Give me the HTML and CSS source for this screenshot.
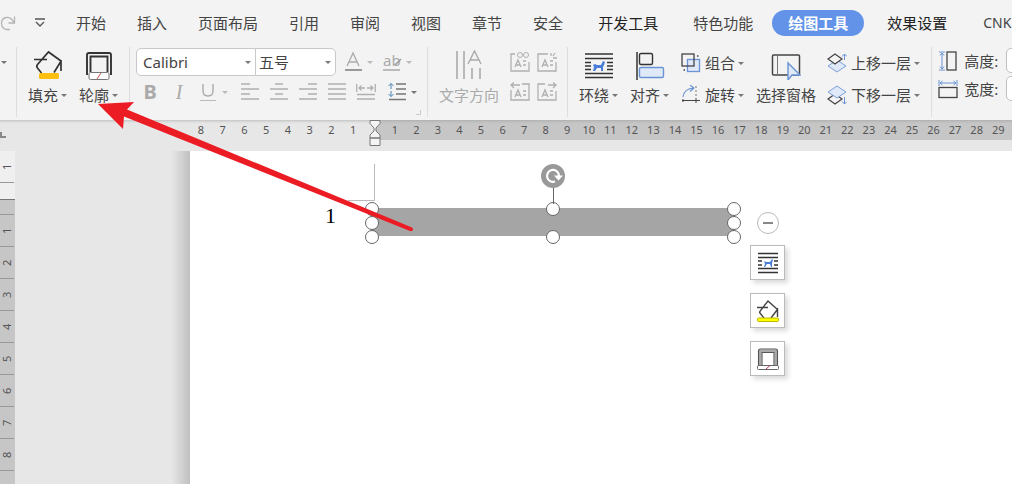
FILE: index.html
```html
<!DOCTYPE html>
<html lang="zh-CN">
<head>
  <meta charset="UTF-8" />
  <title>绘图工具</title>
  <link rel="stylesheet" href="styles.css">
</head>
<body>
  <!-- Tabs -->
  <nav class="tabs">
    <button class="quick redo" aria-label="恢复">
      <svg width="16" height="16" viewBox="0 0 16 16"><path d="M10 14.500H6C0 12 0 4 6 2.500c4-.5 6.500 2 8 5.500M14.500 1.500v6.500H8.500" stroke="#b5b5b5" stroke-width="1.300"/></svg>
    </button>
    <button class="quick more" aria-label="更多">
      <svg width="12" height="12" viewBox="0 0 12 12"><path d="M1 2h10M2 5l4 4 4-4" stroke="#555" stroke-width="1.300"/></svg>
    </button>
    <a href="#">开始</a>
    <a href="#">插入</a>
    <a href="#">页面布局</a>
    <a href="#">引用</a>
    <a href="#">审阅</a>
    <a href="#">视图</a>
    <a href="#">章节</a>
    <a href="#">安全</a>
    <a href="#" class="extra dark">开发工具</a>
    <a href="#" class="extra">特色功能</a>
    <a href="#" class="active">绘图工具</a>
    <a href="#" class="effect dark">效果设置</a>
    <a href="#" class="cnk">CNK</a>
  </nav>

  <!-- Ribbon -->
  <div class="ribbon">
    <div class="group group-first"><i class="caret"></i></div>

    <div class="group">
      <button class="tool">
        <svg width="30" height="30" viewBox="0 0 30 30">
          <path d="M8.500 23l-4-5C3.500 17 3.500 16 4.500 14.500L15.500 2 28 11M1 9.500h13M28 10v11M27.500 12l-6.500 10.500" stroke="#333" stroke-width="1.700"/>
          <rect x="6" y="23" width="20" height="6" rx="1.500" fill="#fdc010"/>
        </svg>
        <span>填充<i class="caret"></i></span>
      </button>
      <button class="tool">
        <svg width="30" height="30" viewBox="0 0 30 30">
          <path d="M3 25V5q0-2 2-2h20q2 0 2 2v20M6.500 22V6.500h17V22" stroke="#333" stroke-width="1.900"/>
          <rect x="5" y="22.500" width="20" height="7" rx="1.500" fill="#fff" stroke="#777"/>
          <path d="M13 29l4-6" stroke="#c0504d"/>
        </svg>
        <span>轮廓<i class="caret"></i></span>
      </button>
    </div>

    <div class="group group-font">
      <div class="row">
        <div class="combo combo-font">
          <select aria-label="字体"><option>Calibri</option></select><i class="caret"></i>
        </div>
        <div class="combo combo-size">
          <select aria-label="字号"><option>五号</option></select><i class="caret"></i>
        </div>
        <button class="mini mini-first off" aria-label="字体颜色">
          <svg width="20" height="22" viewBox="0 0 20 22"><path d="M4 15L10 2l6 13M6 11h8" stroke="#aaa" stroke-width="1.300"/><path d="M2 19h17" stroke="#999" stroke-width="2"/></svg>
          <i class="caret"></i>
        </button>
        <button class="mini off" aria-label="突出显示">
          <svg width="20" height="22" viewBox="0 0 20 22"><text x="1" y="15" font-size="15" fill="#aaa">ab</text><path d="M13 14l6-6" stroke="#999" stroke-width="1.500"/><path d="M1 19h17" stroke="#bbb" stroke-width="2"/></svg>
          <i class="caret"></i>
        </button>
      </div>
      <div class="row row-format">
        <button class="mini letter bold">B</button>
        <button class="mini letter italic">I</button>
        <button class="mini off underline" aria-label="下划线">
          <svg width="20" height="20" viewBox="0 0 20 20"><path d="M5 2v7q0 5 5 5t5-5V2" stroke="#aaa" stroke-width="1.400"/><path d="M2 18.500h16" stroke="#bbb"/></svg>
          <i class="caret"></i>
        </button>
        <button class="mini" aria-label="左对齐">
          <svg width="20" height="20" viewBox="0 0 20 20"><path d="M1 2h9M1 7h18M1 12h9M1 17h18" stroke="#b0b0b0" stroke-width="1.600"/></svg>
        </button>
        <button class="mini" aria-label="居中">
          <svg width="20" height="20" viewBox="0 0 20 20"><path d="M6 2h8M1 7h18M6 12h8M1 17h18" stroke="#b0b0b0" stroke-width="1.600"/></svg>
        </button>
        <button class="mini" aria-label="右对齐">
          <svg width="20" height="20" viewBox="0 0 20 20"><path d="M10 2h9M1 7h18M10 12h9M1 17h18" stroke="#b0b0b0" stroke-width="1.600"/></svg>
        </button>
        <button class="mini" aria-label="两端对齐">
          <svg width="20" height="20" viewBox="0 0 20 20"><path d="M1 2h18M1 7h18M1 12h18M1 17h18" stroke="#b0b0b0" stroke-width="1.600"/></svg>
        </button>
        <button class="mini" aria-label="分散对齐">
          <svg width="20" height="20" viewBox="0 0 20 20"><path d="M.7 2v8M19.300 2v8M3 6h6M11 6h6M5.500 3.500L3 6l2.500 2.500M14.500 3.500L17 6l-2.500 2.500M1 12.500h18M1 17h18" stroke="#b0b0b0" stroke-width="1.300"/></svg>
        </button>
        <button class="mini spacing" aria-label="行距">
          <svg width="20" height="20" viewBox="0 0 20 20"><path d="M9 2h10M9 7h10M9 12h10M2 17.500h17" stroke="#777" stroke-width="1.600"/><path d="M4 7V1.500M1.500 4L4 1.500 6.500 4M4 9v5.500M1.500 12L4 14.500 6.500 12" stroke="#4f86b8"/></svg>
          <i class="caret"></i>
        </button>
      </div>
      <i class="launcher"></i>
    </div>

    <div class="group">
      <button class="tool off" disabled>
        <svg width="30" height="30" viewBox="0 0 30 30"><path d="M3 1v28M10 1v28M18 18v11M26 18v11" stroke="#aaa" stroke-width="1.600"/><path d="M14 14l6.500-13L27 14M16.500 10h8" stroke="#aaa" stroke-width="1.400"/></svg>
        <span>文字方向</span>
      </button>
      <div class="links">
        <button class="mini" aria-label="创建链接">
          <svg width="20" height="20" viewBox="0 0 20 20"><path d="M5 2H1v17h18v-9M5 15l3-7 3 7M6 13h4M13 9h3M13 13h3" stroke="#b0b0b0" stroke-width="1.300"/><circle cx="10" cy="3" r="2.500" stroke="#b0b0b0"/><circle cx="16" cy="3" r="2.500" stroke="#b0b0b0"/></svg>
        </button>
        <button class="mini" aria-label="断开链接">
          <svg width="20" height="20" viewBox="0 0 20 20"><path d="M11 2H1v17h18v-9M5 15l3-7 3 7M6 13h4M13 9h3M13 13h3M14 1v3M18 1l-2 3M16 6h4" stroke="#b0b0b0" stroke-width="1.300"/></svg>
        </button>
        <button class="mini" aria-label="前一文本框">
          <svg width="20" height="20" viewBox="0 0 20 20"><path d="M12 2h7v16H1V8M5 15l3-7 3 7M6 13h4M13 9h3M13 13h3M10 3H1M4 .5L1 3l3 3" stroke="#b0b0b0" stroke-width="1.300"/></svg>
        </button>
        <button class="mini" aria-label="下一文本框">
          <svg width="20" height="20" viewBox="0 0 20 20"><path d="M8 2H1v16h18V9M5 15l3-7 3 7M6 13h4M13 9h3M13 13h3M11 3h8M16 .5L19 3l-3 3" stroke="#b0b0b0" stroke-width="1.300"/></svg>
        </button>
      </div>
    </div>

    <div class="group">
      <button class="tool">
        <svg width="30" height="30" viewBox="0 0 30 30">
          <path d="M1 4h28M1 8.500h28M1 12.500h6M1 16h6M1 19.500h6M23 12.500h6M23 16h6M23 19.500h6M1 23.500h28M1 27.500h28" stroke="#333" stroke-width="1.700"/>
          <path d="M9 15l2-1 2 1h4l2-4 2 1-1 3-1 2v4h-2v-3h-4l-2 3h-2l1-4z" fill="#4a7dd8"/>
        </svg>
        <span>环绕<i class="caret"></i></span>
      </button>
      <button class="tool">
        <svg width="30" height="30" viewBox="0 0 30 30">
          <path d="M2 2v28" stroke="#333" stroke-width="1.500"/>
          <rect x="4.500" y="3.500" width="13" height="11" rx="1.500" stroke="#333" stroke-width="1.400"/>
          <rect x="4.500" y="17.500" width="24" height="10" rx="1.500" fill="#dfe9f8" stroke="#6a93d4" stroke-width="1.400"/>
        </svg>
        <span>对齐<i class="caret"></i></span>
      </button>
      <div class="stack">
        <button class="line">
          <svg width="20" height="20" viewBox="0 0 20 20"><rect x="6.500" y="6.500" width="12" height="12" fill="#dfe9f8" stroke="#6a93d4" stroke-width="1.300"/><rect x="1" y="1" width="12" height="12" stroke="#444" stroke-width="1.300"/><path d="M16 3h1.500M2.500 17H4" stroke="#444" stroke-width="1.500"/></svg>
          组合<i class="caret"></i>
        </button>
        <button class="line">
          <svg width="20" height="20" viewBox="0 0 20 20"><path d="M2 12Q3 4 12 3M9 0l4 3-4 3.500" stroke="#6a93d4" stroke-width="1.200"/><path d="M1 15.500h18M15 13v5M2 14v3" stroke="#444"/><path d="M15 1v11" stroke="#777" stroke-dasharray="2 2"/></svg>
          旋转<i class="caret"></i>
        </button>
      </div>
      <button class="tool">
        <svg width="30" height="30" viewBox="0 0 30 30">
          <rect x="1.500" y="5" width="27" height="20" rx="1" stroke="#444" stroke-width="1.500"/>
          <path d="M6.500 5v20" stroke="#777"/>
          <path d="M17 13v17l4-5h8z" fill="#dfe9f8" stroke="#6a93d4" stroke-width="1.400"/>
        </svg>
        <span>选择窗格</span>
      </button>
      <div class="stack">
        <button class="line">
          <svg width="20" height="20" viewBox="0 0 20 20"><path d="M1 13l9-6 9 6-9 6z" fill="#dfe9f8" stroke="#7ba0da"/><path d="M1 6l7-5 7 5-7 5z" fill="#f3f3f3" stroke="#444" stroke-width="1.200"/><path d="M17.500 7V1M15 3.500L17.500 1 20 3.500" stroke="#6a93d4"/></svg>
          上移一层<i class="caret"></i>
        </button>
        <button class="line">
          <svg width="20" height="20" viewBox="0 0 20 20"><path d="M1 14l7-5 7 5-7 5z" stroke="#444" stroke-width="1.200"/><path d="M1 7l9-6 9 6-9 6z" fill="#dfe9f8" stroke="#7ba0da"/><path d="M17.500 12v7M15 16.500l2.500 2.500 2.500-2.500" stroke="#6a93d4"/></svg>
          下移一层<i class="caret"></i>
        </button>
      </div>
    </div>

    <div class="group group-size">
      <div class="field">
        <svg width="20" height="20" viewBox="0 0 20 20"><path d="M1 1h6M1 19h6M4 2v16M2 4.500L4 2l2 2.500M2 15.500L4 18l2-2.500" stroke="#6a93d4"/><rect x="9" y="1" width="9" height="18" stroke="#444" stroke-width="1.300"/></svg>
        <label for="shape-height">高度:</label>
        <input type="text" id="shape-height">
      </div>
      <div class="field">
        <svg width="20" height="20" viewBox="0 0 20 20"><path d="M1 1v6M19 1v6M2 4h16M4.500 2L2 4l2.500 2M15.500 2L18 4l-2.500 2" stroke="#6a93d4"/><rect x="1" y="8.500" width="18" height="10" stroke="#444" stroke-width="1.300"/></svg>
        <label for="shape-width">宽度:</label>
        <input type="text" id="shape-width">
      </div>
    </div>
  </div>

  <!-- Horizontal ruler -->
  <div class="ruler">
    <div class="ruler-margin">
      <i class="tab-stop"></i>
      <div class="ruler-numbers left">
        <span>8</span><span>7</span><span>6</span><span>5</span><span>4</span><span>3</span><span>2</span><span>1</span>
      </div>
    </div>
    <div class="ruler-body">
      <svg class="indent" width="12" height="27" viewBox="0 0 12 27"><path d="M1 .5h10v3L7 8v3l4 4v3H1v-3l4-4V8L1 3.500zM1 18h10v7.500H1z" fill="#f5f5f5" stroke="#777"/></svg>
      <div class="ruler-numbers right">
        <span>1</span><span>2</span><span>3</span><span>4</span><span>5</span><span>6</span><span>7</span><span>8</span><span>9</span><span>10</span><span>11</span><span>12</span><span>13</span><span>14</span><span>15</span><span>16</span><span>17</span><span>18</span><span>19</span><span>20</span><span>21</span><span>22</span><span>23</span><span>24</span><span>25</span><span>26</span><span>27</span><span>28</span><span>29</span>
      </div>
    </div>
  </div>

  <!-- Document -->
  <div class="workspace">
    <div class="side-ruler">
      <div class="side-top"><span>1</span></div>
      <div class="side-body">
        <span class="half"></span><span>1</span><span>2</span><span>3</span><span>4</span><span>5</span><span>6</span><span>7</span><span>8</span>
      </div>
    </div>
    <div class="gutter"></div>
    <main class="page">
      <i class="crop-mark"></i>
      <p class="page-text">1</p>
      <div class="shape">
        <i class="handle nw"></i><i class="handle w"></i><i class="handle sw"></i>
        <i class="handle n"></i><i class="handle s"></i>
        <i class="handle ne"></i><i class="handle e"></i><i class="handle se"></i>
        <svg class="rotate" width="24" height="40" viewBox="0 0 24 40">
          <path d="M12.500 24v16" stroke="#666"/>
          <circle cx="12" cy="12" r="12" fill="#999"/>
          <path d="M14 17.500A6 6 0 1 1 18 12" stroke="#fff" stroke-width="2.200"/>
          <path d="M13 11.500h9l-4.500 5z" fill="#fff"/>
        </svg>
      </div>

      <div class="float-bar">
        <button class="collapse" aria-label="收起"></button>
        <button class="float-btn" aria-label="环绕">
          <svg width="22" height="22" viewBox="0 0 22 22"><path d="M1 1.500h20M1 5.500h20M1 9h4M1 13h4M17 9h4M17 13h4M1 16.500h20M1 20.500h20" stroke="#333" stroke-width="1.300"/><path d="M7 9l2 1h4l2-3 1 1-1 3v4h-1l-1-3h-3l-2 3H7l1-3z" fill="#4a7dd8"/></svg>
        </button>
        <button class="float-btn" aria-label="填充">
          <svg width="22" height="22" viewBox="0 0 22 22"><path d="M7 18l-4-5c-1-1 0-2 1-3L11 1l10 9M0 7.500h11M20.500 8v9M20 10l-6 8" stroke="#444" stroke-width="1.400"/><rect x=".5" y="18" width="21" height="3.500" rx="1" fill="#ff0" stroke="#bdb800"/></svg>
        </button>
        <button class="float-btn" aria-label="轮廓">
          <svg width="22" height="22" viewBox="0 0 22 22"><path d="M3 18V3h16v15" stroke="#aaa" stroke-width="3"/><path d="M1.500 18V3q0-2 2-2h15q2 0 2 2v15M5 17V4.500h12V17" stroke="#555" stroke-width="1.100"/><rect x=".5" y="17.500" width="21" height="4" rx="1" fill="#fff" stroke="#666"/><path d="M9 21l4-3.500" stroke="#c0304d"/></svg>
        </button>
      </div>
    </main>
  </div>

  <!-- Arrow from the shape up to the outline button -->
  <svg class="pointer" width="320" height="132" viewBox="0 0 320 132">
    <path d="M0 2L36 0 29 7.500 314 125.500Q317 129 312 129L26 14.500 25 27z" fill="#ec1c24"/>
  </svg>
</body>
</html>
```

FILE: styles.css
```css
* {
  box-sizing: border-box;
}

body {
  margin: 0;
  min-height: 100vh;
  display: flex;
  flex-direction: column;
  overflow: hidden;
  position: relative;
  background: #e7e7e7;
  color: #444;
  font-family: "Noto Sans", "Noto Sans CJK SC", sans-serif;
  font-size: 15px;
  line-height: 20px;
}

button,
input,
select {
  font: inherit;
  color: inherit;
}

button {
  padding: 0;
  border: none;
  background: none;
  flex: none;
}

svg {
  display: block;
  flex: none;
  fill: none;
}

.caret {
  display: inline-block;
  flex: none;
  border: solid transparent;
  border-width: 3px 3px 0;
  border-top-color: #777;
}

.off .caret {
  border-top-color: #bbb;
}

/* Tabs */
.tabs {
  display: flex;
  align-items: center;
  height: 47px;
  padding-bottom: 2px;
  overflow: hidden;
  background: #f3f3f3;
  white-space: nowrap;
}

.tabs a {
  flex: none;
  margin-right: 31px;
  color: #444;
  text-decoration: none;
}

.tabs .more {
  margin: 0 30px 0 18px;
}

.tabs .extra {
  margin: 0 31px 0 4px;
}

.tabs .dark {
  color: #222;
}

.tabs .active {
  margin: 0 23px 0 -12px;
  padding: 3px 16px;
  border-radius: 13px;
  background: #6293e8;
  color: #fff;
  font-weight: bold;
}

.tabs .effect {
  margin-right: 36px;
}

.tabs .cnk {
  margin-right: 0;
  font-size: 14px;
}

/* Ribbon */
.ribbon {
  display: flex;
  height: 73px;
  padding-bottom: 3px;
  overflow: hidden;
  background: #f3f3f3;
  white-space: nowrap;
}

.group {
  display: flex;
  flex: none;
  gap: 11px;
  padding: 3px 10px 0 11px;
  border-right: 1px solid #dedede;
}

.group-first {
  width: 17px;
  padding: 14px 0 0 1px;
}

.tool {
  display: flex;
  flex-direction: column;
  align-items: center;
  align-self: flex-start;
  gap: 5px;
}

.tool span,
.line {
  display: flex;
  align-items: center;
}

.tool .caret,
.line .caret {
  margin: 0 1px 0 3px;
}

.tool.off {
  color: #aaa;
}

.group-font {
  flex-direction: column;
  gap: 6px;
  width: 298px;
  padding: 1px 6px 0;
  position: relative;
}

.row {
  display: flex;
  align-items: center;
}

.row-format {
  gap: 9px;
  padding-left: 4px;
}

.combo {
  position: relative;
  height: 28px;
}

.combo select {
  appearance: none;
  width: 100%;
  height: 100%;
  padding: 0 4px 0 6px;
  border: 1px solid #c8c8c8;
  background: #fff;
}

.combo .caret {
  position: absolute;
  right: 5px;
  top: 13px;
}

.combo-font {
  width: 120px;
}

.combo-font select {
  border-radius: 5px 0 0 5px;
}

.combo-size {
  width: 81px;
  margin-left: -1px;
}

.combo-size select {
  padding-left: 3px;
  border-radius: 0 5px 5px 0;
}

.mini {
  display: flex;
  align-items: center;
  justify-content: center;
  gap: 4px;
  min-width: 20px;
  height: 20px;
}

.combo + .mini {
  margin: 0 9px 0 7px;
}

.letter {
  color: #aaa;
  font-size: 20px;
}

.bold {
  font-weight: bold;
}

.italic {
  font-family: "Liberation Serif", serif;
  font-style: italic;
}

.underline {
  margin-right: 3px;
}

.spacing {
  margin-left: 2px;
}

.launcher {
  position: absolute;
  right: 6px;
  bottom: 2px;
  width: 5px;
  height: 5px;
  border: solid #ccc;
  border-width: 0 1px 1px 0;
}

.links {
  display: grid;
  grid-template-columns: 20px 20px;
  gap: 10px 7px;
  align-content: start;
  padding-top: 2px;
}

.stack {
  display: flex;
  flex-direction: column;
  gap: 12px;
  padding-top: 3px;
}

.line svg {
  margin-right: 4px;
}

.group-size {
  flex: 1;
  flex-direction: column;
  gap: 3px;
  min-width: 0;
  padding: 1px 0 0 6px;
  border: none;
  overflow: hidden;
}

.field {
  display: flex;
  align-items: center;
  gap: 6px;
}

.field label {
  flex: none;
  width: 36px;
}

.field input {
  flex: none;
  width: 80px;
  height: 25px;
  border: 1px solid #c0c0c0;
  border-radius: 5px;
  background: #fff;
}

/* Rulers */
.ruler {
  display: flex;
  height: 31px;
  color: #555;
  font-size: 11px;
  box-shadow: inset 0 3px 3px -2px #bbb;
}

.ruler-margin {
  display: flex;
  justify-content: space-between;
  align-items: flex-start;
  flex: none;
  width: 375px;
  padding-right: 11px;
}

.tab-stop {
  width: 6px;
  height: 6px;
  margin-top: 12px;
  border: solid #888;
  border-width: 0 0 2px 2px;
}

.ruler-body {
  flex: 1;
  height: 20px;
  position: relative;
  background: #c6c6c6;
  box-shadow: inset 0 3px 3px -2px #aaa;
}

.ruler-numbers {
  display: grid;
  text-align: center;
}

.ruler-numbers.left {
  grid-template-columns: repeat(8, 1fr);
  width: 174px;
}

.ruler-numbers.right {
  grid-template-columns: repeat(29, 1fr);
  width: 625px;
  margin-left: 9px;
}

.indent {
  position: absolute;
  left: -6px;
  top: 0;
}

.workspace {
  display: flex;
  flex: 1;
}

.side-ruler {
  display: flex;
  flex-direction: column;
  flex: none;
  width: 15px;
  color: #555;
  font-size: 11px;
}

.side-ruler span {
  display: flex;
  align-items: center;
  justify-content: center;
  width: 14px;
  height: 32px;
  line-height: 14px;
  border-top: 1px solid #999;
  writing-mode: vertical-rl;
  transform: rotate(180deg);
}

.side-top {
  height: 48px;
  background: #efefef;
}

.side-body {
  flex: 1;
  border-top: 1px solid #777;
  background: #c6c6c6;
}

.side-ruler .half {
  height: 15px;
}

.gutter {
  flex: none;
  width: 175px;
  background: linear-gradient(to right, transparent 156px, #c0c0c0);
}

/* Page */
.page {
  flex: 1;
  position: relative;
  background: #fff;
}

.crop-mark {
  position: absolute;
  left: 158px;
  top: 13px;
  width: 27px;
  height: 37px;
  border: solid #bbb;
  border-width: 0 1px 1px 0;
}

.page-text {
  position: absolute;
  left: 135px;
  top: 55px;
  margin: 0;
  color: #000;
  font-family: "Liberation Serif", serif;
  font-size: 22px;
}

.shape {
  position: absolute;
  left: 182px;
  top: 57px;
  width: 362px;
  height: 28px;
  background: #a5a5a5;
}

.handle {
  position: absolute;
  width: 14px;
  height: 14px;
  margin: -6px -7px;
  border: 1px solid #666;
  border-radius: 50%;
  background: #fff;
}

.nw, .n, .ne { top: 0; }
.w, .e { top: 50%; }
.sw, .s, .se { top: 100%; }
.nw, .w, .sw { left: 0; }
.n, .s { left: 50%; }
.ne, .e, .se { left: 100%; }

.rotate {
  position: absolute;
  left: 50%;
  bottom: 100%;
  margin: 0 0 4px -12px;
}

.float-bar {
  display: flex;
  flex-direction: column;
  align-items: center;
  gap: 13px;
  position: absolute;
  left: 560px;
  top: 61px;
}

.collapse {
  display: flex;
  align-items: center;
  justify-content: center;
  width: 22px;
  height: 22px;
  margin-bottom: -2px;
  border: 1px solid #bbb;
  border-radius: 50%;
}

.collapse::before {
  content: "";
  width: 10px;
  height: 2px;
  background: #888;
}

.float-btn {
  display: flex;
  align-items: center;
  justify-content: center;
  width: 35px;
  height: 35px;
  border: 1px solid #bbb;
  background: #fff;
  box-shadow: 3px 3px 5px rgba(0, 0, 0, 0.15);
}

.pointer {
  position: absolute;
  left: 98px;
  top: 102px;
  pointer-events: none;
}
```
